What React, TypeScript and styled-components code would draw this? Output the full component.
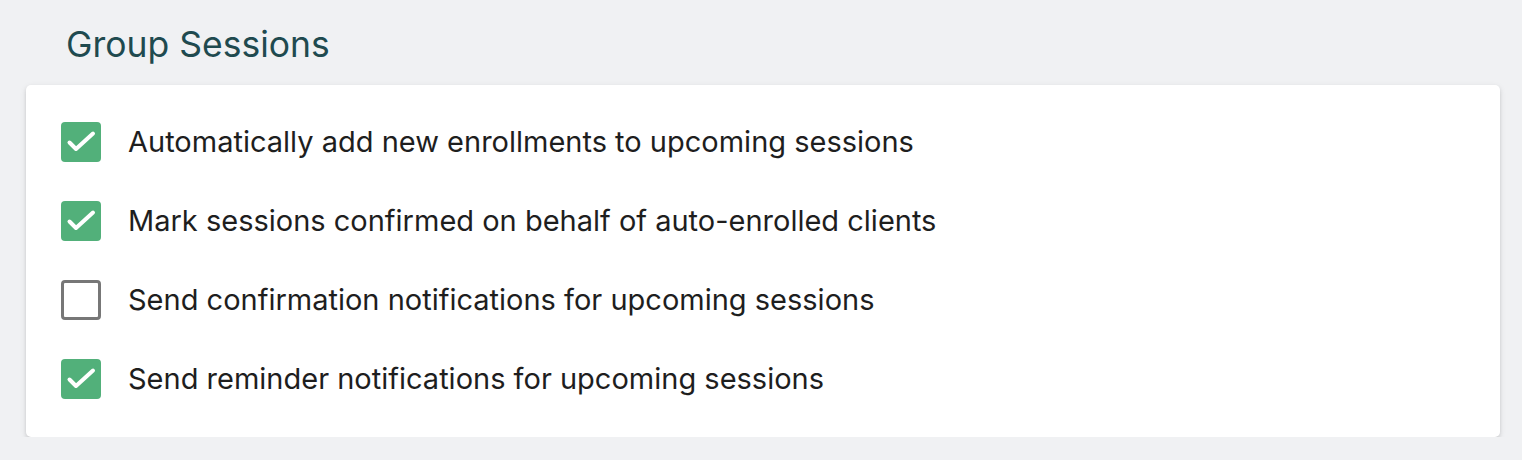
import styled, { createGlobalStyle } from "styled-components";

const GlobalStyle = createGlobalStyle`
    body {
        margin: 0;
        background: #f0f1f3;
        font-family: Inter, "Noto Sans", sans-serif;
    }
`;

const Page = styled.div`
    padding: 24px 22px 0 26px;
`;

const Title = styled.h2`
    margin: 0 0 19px 40px;
    font-size: 35.5px;
    font-weight: 400;
    line-height: 42px;
    color: #1f4a4f;
`;

const Card = styled.section`
    background: #fff;
    border-radius: 5px;
    padding: 37px 35px 38px;
    box-shadow: 0 2px 4px -1px rgba(0, 0, 0, 0.14), 0 2px 6px 0 rgba(0, 0, 0, 0.1);
    display: flex;
    flex-direction: column;
    gap: 39px;
`;

const Row = styled.label`
    display: flex;
    align-items: center;
    gap: 27px;
    cursor: pointer;
`;

const Box = styled.span<{ $checked: boolean }>`
    width: 40px;
    height: 40px;
    box-sizing: border-box;
    border-radius: 4px;
    flex-shrink: 0;
    display: flex;
    align-items: center;
    justify-content: center;
    background: ${p => (p.$checked ? "#52b07a" : "#fff")};
    border: ${p => (p.$checked ? "none" : "3px solid #777")};
`;

const Label = styled.span`
    font-size: 29px;
    color: #1e1e1e;
    line-height: 36px;
`;

interface IOption {
    id: string,
    label: string,
    checked: boolean
}

const options: IOption[] = [
    { id: "auto-add", label: "Automatically add new enrollments to upcoming sessions", checked: true },
    { id: "mark-confirmed", label: "Mark sessions confirmed on behalf of auto-enrolled clients", checked: true },
    { id: "confirm-notif", label: "Send confirmation notifications for upcoming sessions", checked: false },
    { id: "reminder-notif", label: "Send reminder notifications for upcoming sessions", checked: true },
];

function Check() {
    return (
        <svg width="40" height="40" viewBox="0 0 40 40" fill="none">
            <path d="M8.5 20.5l6.5 6.5L32 11.5" stroke="#fff" strokeWidth="4" strokeLinecap="round" strokeLinejoin="round" />
        </svg>
    );
}

function App() {
    return (
        <Page>
            <GlobalStyle />
            <Title>Group Sessions</Title>
            <Card>
                {options.map(opt => (
                    <Row key={opt.id}>
                        <Box $checked={opt.checked}>{opt.checked && <Check />}</Box>
                        <Label>{opt.label}</Label>
                    </Row>
                ))}
            </Card>
        </Page>
    );
}

export default App;
